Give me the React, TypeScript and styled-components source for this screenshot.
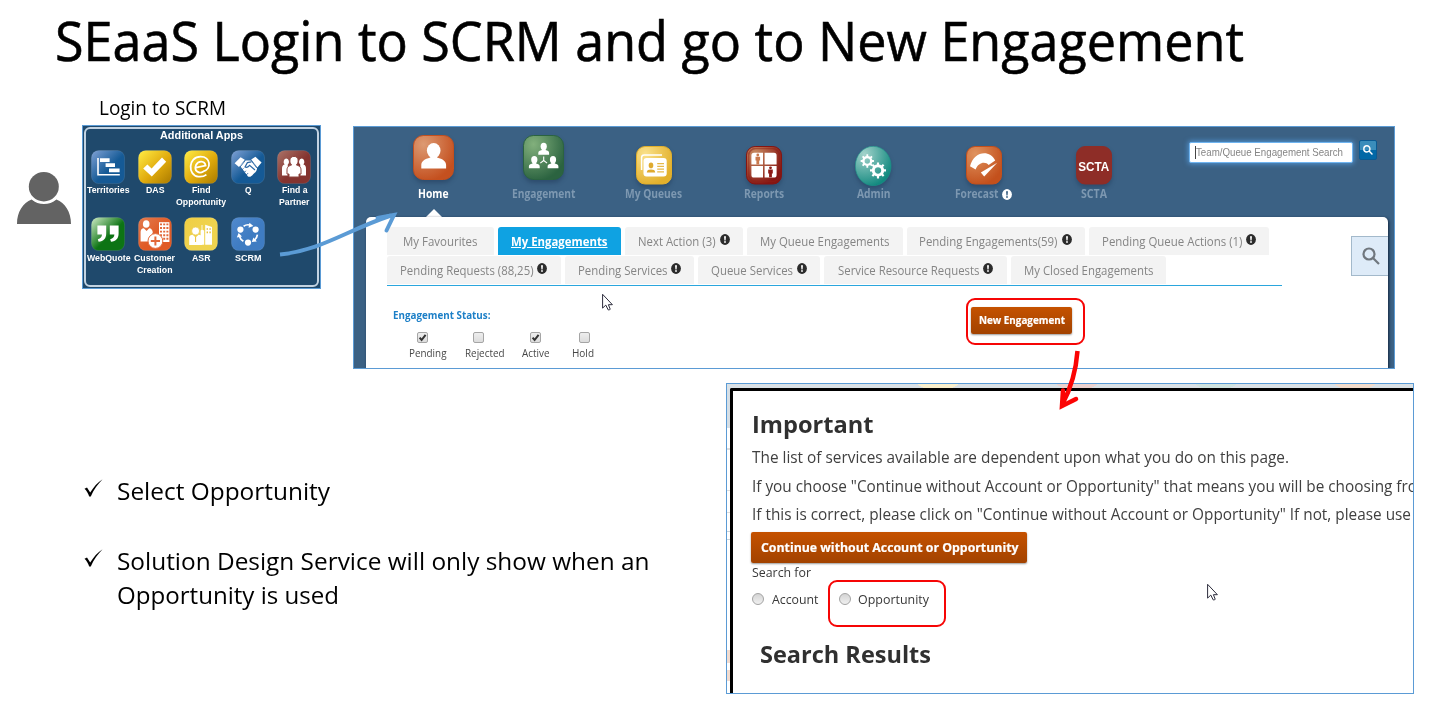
import React, { ReactNode, useLayoutEffect, useRef } from 'react';
import styled, { createGlobalStyle, css } from 'styled-components';

const GlobalStyle = createGlobalStyle`
  * { box-sizing: border-box; }
  body { margin: 0; background: #fff; }
`;

const sans = `'Open Sans', 'Noto Sans', sans-serif`;
const arial = `'Liberation Sans', Arial, sans-serif`;
const frameBlue = '#5b9bd5';

/* ---------- text that is condensed to a given width ---------- */

const FitBox = styled.span<{ $w: number }>`
  display: block;
  flex: none;
  width: ${(p) => p.$w}px;
  white-space: nowrap;
`;

const FitInner = styled.span`
  display: inline-block;
  transform-origin: 0 50%;
`;

function Fit({ w, className, children }: { w: number; className?: string; children: ReactNode }) {
  const ref = useRef<HTMLSpanElement>(null);
  useLayoutEffect(() => {
    const el = ref.current;
    if (!el) return;
    el.style.transform = 'none';
    const natural = el.getBoundingClientRect().width;
    if (natural > 0) el.style.transform = `scaleX(${w / natural})`;
  }, [w]);
  return (
    <FitBox $w={w} className={className}>
      <FitInner ref={ref}>{children}</FitInner>
    </FitBox>
  );
}

/* ---------- slide ---------- */

const Slide = styled.main`
  position: relative;
  width: 1434px;
  height: 723px;
  overflow: hidden;
  background: #fff;
  color: #000;
  font-family: ${sans};
`;

const TitleBar = styled.header`
  height: 95px;
  padding: 0 0 0 55px;
`;

const Title = styled(Fit)`
  font-size: 55px;
  line-height: 79px;
  -webkit-text-stroke: 0.6px #000;
`;

const TopRow = styled.section`
  display: flex;
  align-items: flex-start;
  height: 274px;
`;

const BottomRow = styled.section`
  display: flex;
  align-items: flex-start;
  margin-top: 14px;
`;

const PersonSlot = styled.div`
  width: 54px;
  height: 52px;
  margin: 77px 11px 0 17px;
  svg { display: block; }
`;

/* ---------- additional apps ---------- */

const AppsColumn = styled.div`
  width: 239px;
`;

const AppsCaption = styled(Fit)`
  height: 30px;
  margin-left: 17px;
  font-size: 19.4px;
  line-height: 25px;
`;

const AppsPanel = styled.div`
  height: 164px;
  padding: 1px;
  border: 1px solid ${frameBlue};
  background: #1f496c;
`;

const AppsFrame = styled.div`
  height: 160px;
  border: 2px solid #c3d3e2;
  border-radius: 6px;
  color: #fff;
  font-family: ${arial};
  font-weight: 700;
`;

const AppsHeading = styled(Fit)`
  margin: -2px 0 0 74px;
  height: 22px;
  font-size: 11px;
  line-height: 16px;
`;

const AppsGrid = styled.div`
  display: grid;
  grid-template-columns: repeat(5, 46.5px);
  grid-auto-rows: 67.5px;
  margin: 0.5px 0 0 -1px;
`;

const AppCell = styled.div`
  display: flex;
  flex-direction: column;
  align-items: center;
  width: 46.5px;
  svg { flex: none; margin-bottom: 0.5px; }
`;

const AppLabel = styled(Fit)`
  font-size: 9.3px;
  line-height: 12px;
`;

/* ---------- CRM window ---------- */

const CrmWindow = styled.div`
  width: 1042px;
  height: 243px;
  margin: 31px 0 0 32px;
  border: 1px solid ${frameBlue};
  background: #3b6184;
  overflow: hidden;
`;

const CrmHeader = styled.div`
  display: flex;
  height: 90px;
  padding-left: 25px;
`;

const NavItem = styled.div<{ $active?: boolean }>`
  position: relative;
  display: flex;
  flex-direction: column;
  align-items: center;
  width: 110px;
  color: ${(p) => (p.$active ? '#fff' : '#7d98b1')};
  ${(p) =>
    p.$active &&
    css`
      &::after {
        content: '';
        position: absolute;
        bottom: 0;
        left: 47px;
        border: 8px solid transparent;
        border-top: 0;
        border-bottom-color: #fff;
      }
    `}
`;

const NavIcon = styled.div<{ $big?: boolean }>`
  height: 59px;
  margin-left: -1px;
  padding-top: ${(p) => (p.$big ? 8 : 19)}px;
  svg { display: block; filter: drop-shadow(0 3px 2px rgba(20, 40, 70, 0.35)); }
`;

const NavLabelRow = styled.div`
  display: flex;
  align-items: center;
  gap: 4px;
  height: 16px;
  margin-left: -1px;
`;

const NavLabel = styled(Fit)`
  font-size: 11.5px;
  font-weight: 700;
  line-height: 16px;
`;

const SearchGroup = styled.div`
  display: flex;
  align-items: flex-start;
  margin: 15px 0 0 40px;
`;

const SearchInput = styled.div`
  display: flex;
  align-items: center;
  width: 164px;
  height: 21px;
  padding-left: 5px;
  border-radius: 2px;
  border: 1px solid #6fb4f0;
  background: #fff;
  box-shadow: 0 0 5px 1px rgba(90, 165, 235, 0.75);
`;

const Caret = styled.span`
  width: 1px;
  height: 13px;
  background: #444;
`;

const Placeholder = styled(Fit)`
  color: #858585;
  font-family: ${arial};
  font-size: 11.4px;
  line-height: 15px;
`;

const SearchButton = styled.div`
  display: flex;
  align-items: center;
  justify-content: center;
  width: 18px;
  height: 20px;
  margin: -2px 0 0 6px;
  border-radius: 2px;
  border: 1px solid #0a5a92;
  background: linear-gradient(#3a8dbb 0 50%, #0268a6 50%);
`;

const CrmBody = styled.div`
  position: relative;
  width: 1022px;
  height: 160px;
  margin-left: 12px;
  padding: 10px 0 0 21px;
  border-radius: 5px 5px 0 0;
  background: #fff;
  box-shadow: 1px 1px 3px rgba(10, 25, 45, 0.8);
`;

const TabRow = styled.div<{ $second?: boolean }>`
  display: flex;
  gap: 4px;
  height: ${(p) => (p.$second ? 29.5 : 29)}px;
  width: 895px;
  border-bottom: ${(p) => (p.$second ? '1px solid #2aa6dd' : '0')};
`;

const Tab = styled.div<{ $w: number; $pad: number; $active?: boolean }>`
  display: flex;
  align-items: flex-start;
  flex: none;
  gap: 4px;
  width: ${(p) => p.$w}px;
  height: 28px;
  padding-left: ${(p) => p.$pad}px;
  border-radius: 3px 3px 0 0;
  background: ${(p) => (p.$active ? '#0fa2e2' : '#f3f3f3')};
  color: ${(p) => (p.$active ? '#fff' : '#858585')};
  font-weight: ${(p) => (p.$active ? 700 : 400)};
  ${FitInner} { text-decoration: ${(p) => (p.$active ? 'underline' : 'none')}; }
  svg { margin-top: 7px; }
`;

const TabText = styled(Fit)`
  font-size: 13.2px;
  line-height: 28px;
`;

const SideSearch = styled.div`
  position: absolute;
  right: 0;
  top: 19px;
  display: flex;
  align-items: center;
  justify-content: center;
  width: 37px;
  height: 40px;
  padding-left: 2px;
  border: 1px solid #a3b9cb;
  border-right: 0;
  background: #deebf8;
`;

const StatusRow = styled.div`
  display: flex;
  padding: 20px 0 0 6px;
`;

const StatusBlock = styled.div`
  width: 578px;
`;

const StatusHeading = styled(Fit)`
  color: #1c7fc7;
  font-size: 11px;
  font-weight: 700;
  line-height: 18px;
`;

const CheckList = styled.div`
  display: flex;
  margin: 8px 0 0 16px;
`;

const CheckItem = styled.div<{ $w: number; $box: number }>`
  width: ${(p) => p.$w}px;
  > :first-child { margin-left: ${(p) => p.$box}px; }
`;

const CheckBoxMark = styled.span`
  display: block;
  width: 11px;
  height: 11px;
  border: 1px solid #a5a5a5;
  border-radius: 2px;
  background: linear-gradient(#eee, #dcdcdc);
  svg { display: block; margin: -1px; }
`;

const CheckLabel = styled(Fit)`
  margin-top: 1px;
  color: #474747;
  font-size: 11px;
  line-height: 17px;
`;

const OrangeButton = styled.div`
  display: flex;
  align-items: center;
  justify-content: center;
  flex: none;
  border-radius: 2px;
  background: linear-gradient(#c55200, #a24200);
  box-shadow: 0 1px 2px rgba(0, 0, 0, 0.4);
  color: #fff;
  font-weight: 700;
`;

const NewEngagementButton = styled(OrangeButton)`
  width: 101px;
  height: 27px;
  margin-top: 1px;
`;

const NewEngagementText = styled(Fit)`
  font-size: 10.8px;
  line-height: 26px;
  -webkit-text-stroke: 0.2px #fff;
`;

/* ---------- bullets ---------- */

const Bullets = styled.ul`
  width: 726px;
  margin: 0;
  padding: 91px 0 0 84px;
  list-style: none;
`;

const Bullet = styled.li`
  display: flex;
  align-items: flex-start;
  gap: 14px;
  min-height: 70px;
  svg { flex: none; margin-top: 5px; }
`;

const BulletLine = styled(Fit)`
  font-size: 23.2px;
  line-height: 34px;
`;

/* ---------- important dialog ---------- */

const DialogShot = styled.div`
  width: 688px;
  height: 311px;
  padding: 4px 0 0 3px;
  border: 1px solid ${frameBlue};
  background:
    radial-gradient(ellipse 21px 8px at 211px -2px, #faf0cd 98%, transparent) 0 0 / 100% 5px no-repeat,
    radial-gradient(ellipse 21px 8px at 350px -2px, #ecd2cf 98%, transparent) 0 0 / 100% 5px no-repeat,
    radial-gradient(ellipse 21px 8px at 489px -2px, #cfe3df 98%, transparent) 0 0 / 100% 5px no-repeat,
    radial-gradient(ellipse 21px 8px at 628px -2px, #f3dccb 98%, transparent) 0 0 / 100% 5px no-repeat,
    linear-gradient(#dae1e6, #dae1e6) 0 0 / 100% 5px no-repeat,
    linear-gradient(#d6dfe6 0 44px, #fff 44px 64px, #ddd 64px 66px, #fff 66px 106px, #ddd 106px 107px,
      #fff 107px 128px, #ddd 128px 129px, #fff 129px 147px, #c9d3da 147px 148px, #fff 148px 155px,
      #c9d3da 155px 156px, #fff 156px 266px, #f2dcd0 266px 279px, #fff 279px 286px, #f2dcd0 286px 297px, #fff 297px);
  overflow: hidden;
`;

const DialogBody = styled.div`
  height: 305px;
  padding: 16px 0 0 19px;
  border: 3px solid #000;
  border-width: 3px 0 0 3px;
  border-radius: 2px 0 0 0;
  background: #fff;
  color: #383838;
`;

const DialogHeading = styled(Fit)`
  color: #303030;
  font-size: 23.4px;
  font-weight: 700;
  line-height: 35px;
`;

const DialogLines = styled.div`
  padding-top: 1px;
`;

const DialogLine = styled(Fit)`
  color: #404040;
  font-size: 15.5px;
  line-height: 28.7px;
`;

const ContinueButton = styled(OrangeButton)`
  width: 276px;
  height: 31px;
  margin: 3px 0 0 -1px;
`;

const ContinueText = styled(Fit)`
  margin-left: 1px;
  font-size: 12.8px;
  line-height: 29px;
  -webkit-text-stroke: 0.2px #fff;
`;

const SmallLine = styled(Fit)`
  font-size: 12.8px;
  line-height: 18px;
`;

const RadioRow = styled.div`
  display: flex;
  align-items: center;
  margin-top: 9px;
`;

const Radio = styled.span`
  flex: none;
  width: 12px;
  height: 12px;
  margin-right: 7.5px;
  border: 1px solid #a3a3a3;
  border-radius: 50%;
  background: linear-gradient(#d4d4d4, #f0f0f0);
`;

const RadioLabel = styled(SmallLine)`
  margin-right: 20.5px;
`;

const ResultsHeading = styled(DialogHeading)`
  margin: 29px 0 0 8px;
`;

/* ---------- annotations ---------- */

const Highlight = styled.div<{ $x: number; $y: number; $w: number; $h: number }>`
  position: absolute;
  left: ${(p) => p.$x}px;
  top: ${(p) => p.$y}px;
  width: ${(p) => p.$w}px;
  height: ${(p) => p.$h}px;
  border: 2px solid #f60505;
  border-radius: 9px;
`;

const Overlay = styled.svg`
  position: absolute;
  left: 0;
  top: 0;
  pointer-events: none;
`;

/* ---------- icons ---------- */

const Alert = ({ light }: { light?: boolean }) => (
  <svg width="10" height="11" viewBox="0 0 10 11">
    <ellipse cx="5" cy="5.5" rx="4.9" ry="5.4" fill={light ? '#fff' : '#2b2b2b'} />
    <path d="M4 2.2h2L5.6 6.4H4.4z" fill={light ? '#3b6184' : '#fff'} />
    <circle cx="5" cy="8" r=".9" fill={light ? '#3b6184' : '#fff'} />
  </svg>
);

const Magnifier = ({ size, color, width }: { size: number; color: string; width: number }) => (
  <svg width={size} height={size} viewBox="0 0 18 18" fill="none" stroke={color} strokeWidth={width}>
    <circle cx="7" cy="7" r="5.5" />
    <path d="M11 11l6 6" />
  </svg>
);

const Tick = () => (
  <svg width="19" height="19" viewBox="0 0 19 19">
    <path d="M0.5 9.8 3 8.6 6.2 13.6 C9.5 8.4 13.5 3.2 18.6 0.2 C14 4.8 9.6 10.5 6.8 17.5 L5.2 17.5 C4.2 14.5 2.6 11.6 0.5 9.8z" />
  </svg>
);

const gradients: Record<string, [string, string]> = {
  blue: ['#7097cc', '#155a96'],
  gold: ['#fbe33d', '#a97a00'],
  maroon: ['#a56a60', '#84332f'],
  green: ['#b5dcae', '#0d7414'],
  orange: ['#e2774a', '#e05a25'],
  yellow: ['#f0cf45', '#efd34f'],
  sky: ['#4f88cc', '#3f7cc2'],
};

function AppTile({ tone, children }: { tone: string; children: ReactNode }) {
  const [a, b] = gradients[tone];
  return (
    <svg width="34" height="34" viewBox="0 0 34 34">
      <defs>
        <linearGradient id={`tile-${tone}`} x1="0" y1="0" x2="1" y2="1">
          <stop offset="0.08" stopColor={a} />
          <stop offset="0.55" stopColor={tone === 'gold' ? '#e0aa0c' : b} />
          <stop offset="1" stopColor={b} />
        </linearGradient>
      </defs>
      <rect x=".4" y=".4" width="33.2" height="33.2" rx="7.5" fill={`url(#tile-${tone})`} stroke="rgba(255,255,255,.12)" strokeWidth=".8" />
      {children}
    </svg>
  );
}

const apps: { name: string[]; widths: number[]; tone: string; art: ReactNode }[] = [
  {
    name: ['Territories'], widths: [42.5], tone: 'blue',
    art: (
      <g fill="#fff">
        <path d="M6.2 8v17.6h22.6v-1.6H7.8V8z" />
        <path d="M9 8.3h9.6V12H9zM14.6 13.2H24v3.7h-9.4zM18 18.4h10.6v3.8H18z" />
      </g>
    ),
  },
  {
    name: ['DAS'], widths: [18.5], tone: 'gold',
    art: <path d="M5.2 18.6 9.4 14.6 13.6 18.6 24 7.6 28.2 11.8 13.8 26.6z" fill="#fff" />,
  },
  {
    name: ['Find', 'Opportunity'], widths: [18.5, 50], tone: 'gold',
    art: (
      <path
        d="M11.8 17.6 21.6 15.6 C20.8 10.6 14.4 10.2 12 15 C9.6 21 15 24.4 19.4 21.4 C27.6 19 27 6.6 16.6 6.6 C3.8 6.6 3.6 25.2 14.2 26.6 C17.4 27 20.4 26.2 22.4 24.6"
        fill="none" stroke="#fff" strokeWidth="1.8"
      />
    ),
  },
  {
    name: ['Q'], widths: [6.5], tone: 'blue',
    art: (
      <g>
        <path d="M3.6 13.2 9.6 7.2 13.8 9.8 8 17z M20.2 9.6 24.4 6.8 30.6 12.6 26.4 17.4z" fill="#fff" />
        <path d="M9 15.8 14.2 10.4 20 10.6 26 17.4 C26.4 20 24.6 22.4 22.4 24 C20.6 26.4 18.6 27.6 17 26.4z" fill="#fff" />
        <path d="M8.6 17.6 14.4 10.4M25.8 18 20 10.4" stroke="#2f6aa8" strokeWidth=".9" />
        <path d="M20.4 11.8 16.4 12.6 14 17 C16 18.2 17.4 16.8 18.6 15.4 L24 20" fill="none" stroke="#2a66a4" strokeWidth="1.2" />
        <path d="M10.4 20.4l2-2M12.6 23l2.2-2.2M15 25.2l2-2" stroke="#2a66a4" strokeWidth="1" />
      </g>
    ),
  },
  {
    name: ['Find a', 'Partner'], widths: [25.5, 30.5], tone: 'maroon',
    art: (
      <g fill="#fff">
        <path d="M9.4 8.6a2.8 3.3 0 0 1 1.4 6l-.2 11H5V19c0-2.6.6-4 2.6-4.6A2.8 3.3 0 0 1 9.4 8.6z" />
        <path d="M24.6 8.6a2.8 3.3 0 0 0-1.4 6l.2 11H29V19c0-2.6-.6-4-2.6-4.6a2.8 3.3 0 0 0-1.8-5.8z" />
        <path d="M17 6.4c5 0 5 6.2 2.4 8.6 3.6 1 4.6 2.6 4.6 5V24h-2v3H12v-3h-2v-4c0-2.4 1-4 4.6-5C12 12.6 12 6.4 17 6.4z" stroke="#8e4640" strokeWidth="1" />
      </g>
    ),
  },
  {
    name: ['WebQuote'], widths: [43.5], tone: 'green',
    art: (
      <path d="M6.4 8.6h8.8v7.8c0 5-2.6 7.8-7.6 8.4l-.8-2.6c2.8-.6 4-2 4.2-4.6H6.4zM18.8 8.6h8.8v7.8c0 5-2.6 7.8-7.6 8.4l-.8-2.6c2.8-.6 4-2 4.2-4.6h-4.6z" fill="#fff" />
    ),
  },
  {
    name: ['Customer', 'Creation'], widths: [41, 35.5], tone: 'orange',
    art: (
      <g>
        <path d="M21 5.2h10.4V25H21z" fill="#fff" />
        <path d="M22 7.4h8.4M22 11h8.4M22 14.6h8.4M22 18.2h8.4M22 21.8h8.4" stroke="#e2693a" strokeWidth="1.9" strokeDasharray="2 1.2" />
        <ellipse cx="8.2" cy="7" rx="3.3" ry="3.8" fill="#fff" />
        <path d="M2.6 24.6V15c0-2.4 1.2-3.6 3.2-3.8l2.8 2.8 2.6-2.8c2 .2 3.4 1.6 3.6 4.2l-4 9.2z" fill="#fff" />
        <circle cx="17.4" cy="24" r="7.4" fill="#fff" stroke="#e2693a" strokeWidth="1" />
        <path d="M17.4 19.4v9.2M12.8 24h9.2" stroke="#e2693a" strokeWidth="2" />
      </g>
    ),
  },
  {
    name: ['ASR'], widths: [18.5], tone: 'yellow',
    art: (
      <g>
        <path d="M16.6 27.8V13.4l1-.6V8h.8v4.8l1.8.8v14.2zM21.2 27.8V7.8l6.8 2.2v17.8z" fill="#fff" />
        <path d="M22.6 12h1.4M25.4 12h1.4M22.6 15.4h1.4M25.4 15.4h1.4" stroke="#e8bf38" strokeWidth="1.7" />
        <circle cx="11.6" cy="14" r="4" fill="#fff" stroke="#ecc844" strokeWidth=".7" />
        <path d="M5.2 28V20.4c0-1.6 1.4-2.4 3.4-2.6l3 2.8 3-2.8c2 .2 3.6 1 3.6 2.6V28z" fill="#fff" />
        <path d="M11.6 20v5" stroke="#e8bf38" strokeWidth="1" />
      </g>
    ),
  },
  {
    name: ['SCRM'], widths: [26.5], tone: 'sky',
    art: (
      <g fill="#fff">
        <circle cx="9.4" cy="12.6" r="3.1" /><circle cx="24.6" cy="12.6" r="3.1" /><circle cx="17" cy="25.6" r="3.1" />
        <path d="M12.6 9.2c2-1.4 4.6-1.8 7-1" fill="none" stroke="#fff" strokeWidth="1.7" />
        <path d="M18.4 5.8 22.4 9l-4.8 1.8z" />
        <path d="M26.4 17.6c-.2 2.2-1.4 4-2.8 5.4" fill="none" stroke="#fff" strokeWidth="1.7" />
        <path d="M25.8 24.4 20.8 25l1.6-4.6z" />
        <path d="M12.4 24.2c-2-1.2-3.4-3-4-5" fill="none" stroke="#fff" strokeWidth="1.7" />
        <path d="M5.8 20.4 7.6 16l3.4 3.4z" />
      </g>
    ),
  },
];

function NavTile({ id, a, b, w = 36, h = 38.5, children }: { id: string; a: string; b: string; w?: number; h?: number; children: ReactNode }) {
  return (
    <svg width={w} height={h} viewBox={`0 0 ${w} ${h}`}>
      <defs>
        <radialGradient id={`nav-${id}`} cx=".25" cy=".2" r=".85">
          <stop offset="0" stopColor={a} />
          <stop offset="1" stopColor={b} />
        </radialGradient>
      </defs>
      {id === 'admin' ? (
        <ellipse cx={w / 2} cy={h / 2} rx={w / 2 - 0.3} ry={h / 2 - 0.3} fill={`url(#nav-${id})`} stroke="#1f948a" strokeWidth=".6" />
      ) : (
        <rect x=".5" y=".5" width={w - 1} height={h - 1} rx={w * 0.24} fill={`url(#nav-${id})`} stroke={b} strokeWidth="1" />
      )}
      {children}
    </svg>
  );
}

const Bust = ({ x, y }: { x: number; y: number }) => (
  <g transform={`translate(${x} ${y})`} fill="#fff">
    <ellipse cx="0" cy="-4" rx="3.1" ry="3.7" />
    <path d="M-5.4 4.4V2.6C-5.4.8-4 .2-1.8-.4L-1.6-2h3.2l.2 1.6C4 .2 5.4.8 5.4 2.6v1.8z" />
  </g>
);

const Gear = ({ x, y, r }: { x: number; y: number; r: number }) => (
  <g transform={`translate(${x} ${y})`} fill="none" stroke="#fff">
    <circle r={r} strokeWidth={r * 0.62} />
    {[0, 45, 90, 135].map((d) => (
      <g key={d} transform={`rotate(${d})`} strokeWidth={r * 0.46}>
        <path d={`M0 ${-r * 1.7}V${-r}M0 ${r}V${r * 1.7}`} />
      </g>
    ))}
  </g>
);

const Figure = ({ x, y, fill }: { x: number; y: number; fill: string }) => (
  <g transform={`translate(${x} ${y})`} fill={fill}>
    <circle cy="-4" r="1.4" />
    <path d="M-2.3-2.2h4.6V1.6H1.4V5.4h-2.8V1.6h-.9z" />
  </g>
);

const nav: { label: string; w: number; big?: boolean; alert?: boolean; art: ReactNode }[] = [
  {
    label: 'Home', w: 30.5, big: true,
    art: (
      <NavTile id="home" a="#dd9a72" b="#c4501f" w={41} h={45}>
        <ellipse cx="20.7" cy="15.6" rx="6.8" ry="7.6" fill="#fff" />
        <path d="M8.3 33.4V30c0-3.8 3.2-6 9-7.6l.6-2h5.6l.6 2c5.8 1.6 9 3.8 9 7.6v3.4z" fill="#fff" />
      </NavTile>
    ),
  },
  {
    label: 'Engagement', w: 63.5, big: true,
    art: (
      <NavTile id="engagement" a="#82b07c" b="#2b6340" w={41} h={45}>
        <Bust x={20.7} y={15.4} /><Bust x={11.3} y={28.8} /><Bust x={30} y={28.8} />
        <path d="M20.7 21.5v4M20.7 25.5l-3.4 2.6M20.7 25.5l3.4 2.6" stroke="#fff" strokeWidth="1.1" fill="none" />
      </NavTile>
    ),
  },
  {
    label: 'My Queues', w: 57,
    art: (
      <NavTile id="queues" a="#fae18a" b="#e2b02c">
        <path d="M5.6 24V11.5q0-2.6 2.6-2.6H26" stroke="#fff" strokeWidth="1.5" fill="none" />
        <rect x="7.5" y="12" width="23.2" height="18.6" rx="3" fill="#fff" />
        <ellipse cx="15" cy="19.4" rx="2.3" ry="2.8" fill="#dfaa2e" />
        <path d="M10.8 26.6c0-2.4 1.8-3 4.2-3s4.2.6 4.2 3z" fill="#dfaa2e" />
        <path d="M21.2 17.7h6.8M21.2 20.4h6.8M21.2 23.1h6.8M21.2 25.8h6.8" stroke="#e6b94a" strokeWidth="1.2" />
      </NavTile>
    ),
  },
  {
    label: 'Reports', w: 40,
    art: (
      <NavTile id="reports" a="#c98c60" b="#861512">
        <rect x="2.6" y="2.6" width="30.8" height="33" rx="7" fill="none" stroke="#8d2018" strokeOpacity=".5" strokeWidth="1.5" />
        <path d="M8 6.8h9v11.7H5.4V9.4Q5.4 6.8 8 6.8zM18.6 6.8H28q2.6 0 2.6 2.6v9.1h-12zM5.4 20.1H17v11.5H8Q5.4 31.6 5.4 29zM18.6 20.1h12V29q0 2.6-2.6 2.6h-9.4z" fill="#fff" />
        <Figure x={11.8} y={13} fill="#c9794d" /><Figure x={24.5} y={25.8} fill="#8c1a16" />
      </NavTile>
    ),
  },
  {
    label: 'Admin', w: 33.5,
    art: (
      <NavTile id="admin" a="#a3d3cb" b="#12897f" w={36.4} h={40}>
        <Gear x={12.3} y={15} r={3.9} /><Gear x={23} y={24.4} r={4.7} />
      </NavTile>
    ),
  },
  {
    label: 'Forecast', w: 43.5, alert: true,
    art: (
      <NavTile id="forecast" a="#e0935f" b="#c3501c">
        <path d="M4 20.2C8 5 23.6 3.4 29.2 14.4L22.6 19C19.8 15.2 12.4 15.6 9.6 23.6z" fill="#fff" />
        <path d="M31.2 16.8 18.2 30.4 14.8 26.6z" fill="#fff" />
      </NavTile>
    ),
  },
  {
    label: 'SCTA', w: 26,
    art: (
      <NavTile id="scta" a="#8e2d27" b="#8e2d27">
        <text x="2.2" y="24.8" textLength="31" lengthAdjust="spacingAndGlyphs" fill="#fff" fontFamily="Liberation Sans, Arial, sans-serif" fontWeight="700" fontSize="13">SCTA</text>
      </NavTile>
    ),
  },
];

type TabSpec = { text: string; w: number; pad: number; tw: number; alert?: boolean; active?: boolean };

const tabsTop: TabSpec[] = [
  { text: 'My Favourites', w: 107, pad: 16, tw: 74.5 },
  { text: 'My Engagements', w: 123, pad: 13, tw: 96.5, active: true },
  { text: 'Next Action (3)', w: 118, pad: 13, tw: 77.5, alert: true },
  { text: 'My Queue Engagements', w: 156, pad: 13, tw: 129.5 },
  { text: 'Pending Engagements(59)', w: 178, pad: 12, tw: 138.5, alert: true },
  { text: 'Pending Queue Actions (1)', w: 180, pad: 12.5, tw: 140.5, alert: true },
];

const tabsBottom: TabSpec[] = [
  { text: 'Pending Requests (88,25)', w: 174, pad: 12.5, tw: 133.5, alert: true },
  { text: 'Pending Services', w: 129, pad: 12.5, tw: 89.5, alert: true },
  { text: 'Queue Services', w: 122, pad: 13, tw: 82, alert: true },
  { text: 'Service Resource Requests', w: 182.5, pad: 13.5, tw: 141.5, alert: true },
  { text: 'My Closed Engagements', w: 155.5, pad: 13, tw: 129.5 },
];

const statuses = [
  { label: 'Pending', w: 56, tw: 37.5, box: 8, on: true },
  { label: 'Rejected', w: 57, tw: 39.5, box: 8, on: false },
  { label: 'Active', w: 49.5, tw: 27.5, box: 8, on: true },
  { label: 'Hold', w: 30, tw: 22, box: 7.5, on: false },
];

const renderTabs = (tabs: TabSpec[]) =>
  tabs.map((t) => (
    <Tab key={t.text} $w={t.w} $pad={t.pad} $active={t.active}>
      <TabText w={t.tw}>{t.text}</TabText>
      {t.alert && <Alert />}
    </Tab>
  ));

const Pointer = ({ x, y }: { x: number; y: number }) => (
  <path
    transform={`translate(${x} ${y})`}
    d="M.6.8V14.6L3.8 11.6 6.2 16.4Q7.6 17 8.2 15.6L6.4 11.2H10.4z"
    fill="#fff" stroke="#2c2c3c" strokeWidth="1"
  />
);

export default function App() {
  return (
    <Slide>
      <GlobalStyle />
      <TitleBar>
        <Title w={1189}>SEaaS Login to SCRM and go to New Engagement</Title>
      </TitleBar>

      <TopRow>
        <PersonSlot>
          <svg width="54" height="52" viewBox="0 0 54 52" fill="#636363">
            <ellipse cx="26.8" cy="14.7" rx="15" ry="14.7" />
            <path d="M0 52C0 40 6 31 14.6 27.6C21.5 33.6 32.5 33.6 39.4 27.6C48 31 54 40 54 52z" />
          </svg>
        </PersonSlot>

        <AppsColumn>
          <AppsCaption w={127}>Login to SCRM</AppsCaption>
          <AppsPanel>
            <AppsFrame>
              <AppsHeading w={83}>Additional Apps</AppsHeading>
              <AppsGrid>
                {apps.map((app) => (
                  <AppCell key={app.name.join(' ')}>
                    <AppTile tone={app.tone}>{app.art}</AppTile>
                    {app.name.map((line, i) => (
                      <AppLabel key={line} w={app.widths[i]}>{line}</AppLabel>
                    ))}
                  </AppCell>
                ))}
              </AppsGrid>
            </AppsFrame>
          </AppsPanel>
        </AppsColumn>

        <CrmWindow>
          <CrmHeader>
            {nav.map((item) => (
              <NavItem key={item.label} $active={item.label === 'Home'}>
                <NavIcon $big={item.big}>{item.art}</NavIcon>
                <NavLabelRow>
                  <NavLabel w={item.w}>{item.label}</NavLabel>
                  {item.alert && <Alert light />}
                </NavLabelRow>
              </NavItem>
            ))}
            <SearchGroup>
              <SearchInput>
                <Caret />
                <Placeholder w={147}>Team/Queue Engagement Search</Placeholder>
              </SearchInput>
              <SearchButton>
                <Magnifier size={10} color="#fff" width={2.6} />
              </SearchButton>
            </SearchGroup>
          </CrmHeader>

          <CrmBody>
            <TabRow>{renderTabs(tabsTop)}</TabRow>
            <TabRow $second>{renderTabs(tabsBottom)}</TabRow>
            <StatusRow>
              <StatusBlock>
                <StatusHeading w={97.5}>Engagement Status:</StatusHeading>
                <CheckList>
                  {statuses.map((s) => (
                    <CheckItem key={s.label} $w={s.w} $box={s.box}>
                      <CheckBoxMark>
                        {s.on && (
                          <svg width="11" height="11" viewBox="0 0 11 11">
                            <path d="M2.6 5.6 4.6 8 8.6 2.8" fill="none" stroke="#333" strokeWidth="2" />
                          </svg>
                        )}
                      </CheckBoxMark>
                      <CheckLabel w={s.tw}>{s.label}</CheckLabel>
                    </CheckItem>
                  ))}
                </CheckList>
              </StatusBlock>
              <NewEngagementButton>
                <NewEngagementText w={86}>New Engagement</NewEngagementText>
              </NewEngagementButton>
            </StatusRow>
            <SideSearch>
              <Magnifier size={18} color="#70777e" width={2.2} />
            </SideSearch>
          </CrmBody>
        </CrmWindow>
      </TopRow>

      <BottomRow>
        <Bullets>
          <Bullet>
            <Tick />
            <BulletLine w={213}>Select Opportunity</BulletLine>
          </Bullet>
          <Bullet>
            <Tick />
            <div>
              <BulletLine w={532.5}>Solution Design Service will only show when an</BulletLine>
              <BulletLine w={222}>Opportunity is used</BulletLine>
            </div>
          </Bullet>
        </Bullets>

        <DialogShot>
          <DialogBody>
            <DialogHeading w={121.5}>Important</DialogHeading>
            <DialogLines>
              <DialogLine w={537}>The list of services available are dependent upon what you do on this page.</DialogLine>
              <DialogLine w={665}>If you choose "Continue without Account or Opportunity" that means you will be choosing fro</DialogLine>
              <DialogLine w={659}>If this is correct, please click on "Continue without Account or Opportunity" If not, please use</DialogLine>
            </DialogLines>
            <ContinueButton>
              <ContinueText w={257.5}>Continue without Account or Opportunity</ContinueText>
            </ContinueButton>
            <SmallLine w={59}>Search for</SmallLine>
            <RadioRow>
              <Radio />
              <RadioLabel w={46.5}>Account</RadioLabel>
              <Radio />
              <RadioLabel w={71}>Opportunity</RadioLabel>
            </RadioRow>
            <ResultsHeading w={171}>Search Results</ResultsHeading>
          </DialogBody>
        </DialogShot>
      </BottomRow>

      <Highlight $x={966} $y={298} $w={119} $h={47} />
      <Highlight $x={828} $y={580} $w={118} $h={47} />
      <Overlay width="1434" height="723" viewBox="0 0 1434 723">
        <g fill="none" stroke={frameBlue} strokeWidth="4">
          <path d="M280 254.5C322 250 345 231 391 215.5" />
          <path d="M377.5 218 394 215 386.5 230.5" strokeLinecap="round" strokeLinejoin="miter" />
        </g>
        <g fill="none" stroke="#fb0404" strokeWidth="4.5">
          <path d="M1077.5 351C1076 371 1071 388 1062.5 404" />
          <path d="M1063 390.5 1062 406 1076 399" strokeLinecap="round" />
        </g>
        <Pointer x={602} y={293.5} />
        <Pointer x={1207} y={583.5} />
      </Overlay>
    </Slide>
  );
}
